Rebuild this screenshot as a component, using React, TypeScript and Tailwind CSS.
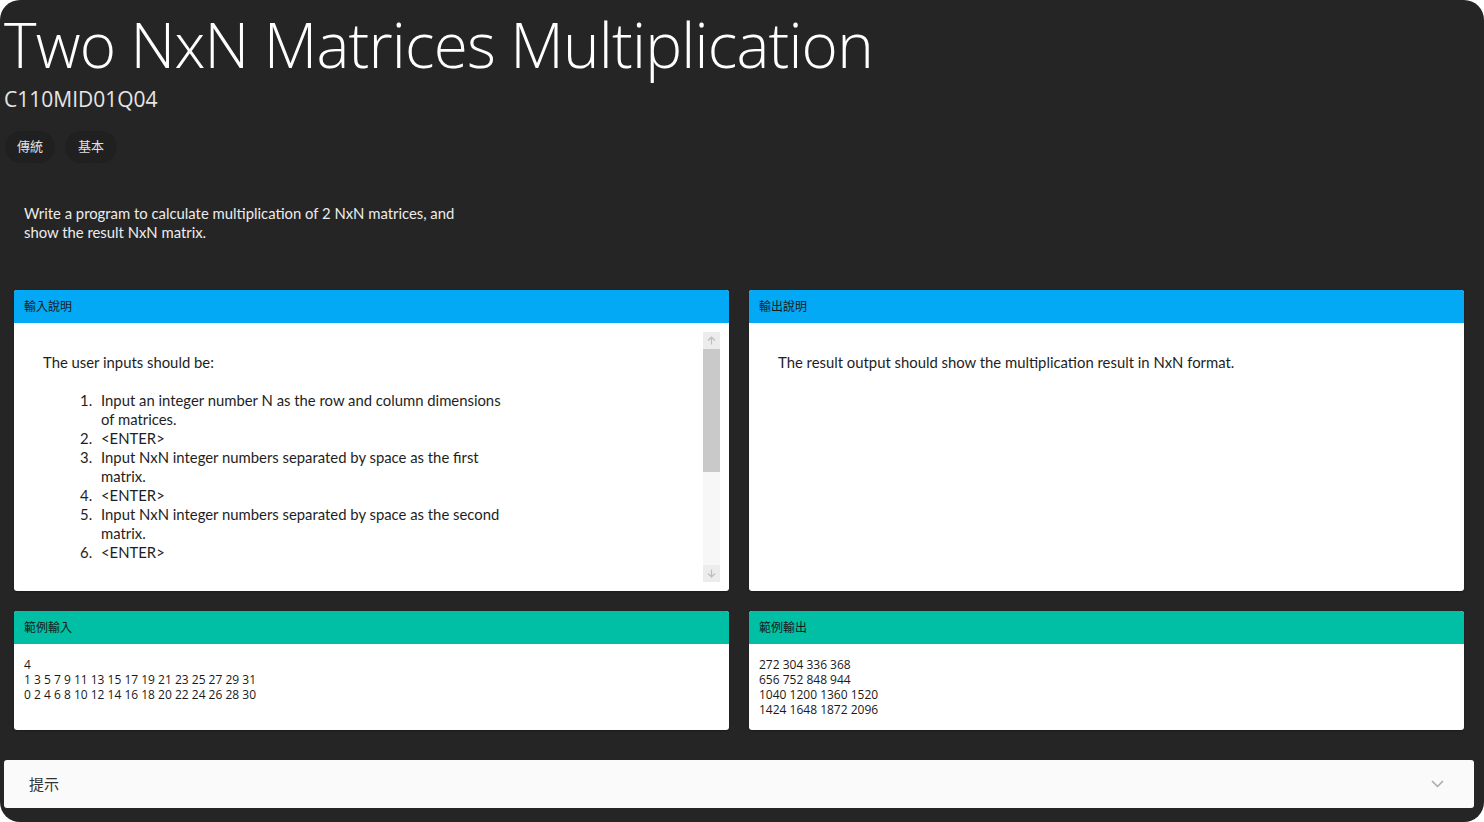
import React from "react";

const sans = "font-['Open_Sans','Noto_Sans_CJK_TC',sans-serif]";
const body = "font-['Lato','Noto_Sans_CJK_TC',sans-serif]";

function Panel({
  title,
  color,
  bodyClass,
  children,
}: {
  title: string;
  color: string;
  bodyClass: string;
  children: React.ReactNode;
}) {
  return (
    <div className="flex flex-col overflow-hidden rounded-[3px] bg-white shadow-[0_1px_2px_rgba(0,0,0,0.3)]">
      <div
        className={`flex h-[33px] items-center pl-[10px] text-[12px] text-[#1a1a1a] ${color} ${sans}`}
      >
        {title}
      </div>
      <div className={bodyClass}>{children}</div>
    </div>
  );
}

function ScrollBar() {
  return (
    <div className="my-[9px] mr-[9px] flex w-[17px] flex-col bg-[#f7f7f7]">
      <div className="flex h-[17px] items-center justify-center bg-[#ececec]">
        <svg width="9" height="9" viewBox="0 0 9 9" fill="none" stroke="#bdbdbd" strokeWidth="1.2">
          <path d="M4.5 8.5V1M1 4.5l3.5-3.5L8 4.5" />
        </svg>
      </div>
      <div className="h-[123px] bg-[#c9c9c9]" />
      <div className="flex-1" />
      <div className="flex h-[17px] items-center justify-center bg-[#ececec]">
        <svg width="9" height="9" viewBox="0 0 9 9" fill="none" stroke="#bdbdbd" strokeWidth="1.2">
          <path d="M4.5 0.5V8M1 4.5l3.5 3.5L8 4.5" />
        </svg>
      </div>
    </div>
  );
}

const steps = [
  "Input an integer number N as the row and column dimensions of matrices.",
  "<ENTER>",
  "Input NxN integer numbers separated by space as the first matrix.",
  "<ENTER>",
  "Input NxN integer numbers separated by space as the second matrix.",
  "<ENTER>",
];

export default function App() {
  return (
    <div className="min-h-screen bg-white">
      <div className="flex h-[822px] flex-col overflow-hidden rounded-[20px] bg-[#252525] pl-[4px] pr-[10px]">
        <h1
          className={`h-[88px] text-[62px] font-light leading-[88px] tracking-[-0.8px] text-white ${sans}`}
        >
          Two NxN Matrices Multiplication
        </h1>
        <div className={`h-[22px] text-[21px] leading-[22px] text-[#e6e6e6] ${sans}`}>
          C110MID01Q04
        </div>
        <div className={`ml-[1px] mt-[21px] flex gap-[10px] ${sans}`}>
          <span className="flex h-[32px] items-center rounded-full bg-[#202020] px-[12px] text-[13px] text-[#e0e0e0]">
            傳統
          </span>
          <span className="flex h-[32px] items-center rounded-full bg-[#202020] px-[13px] text-[13px] text-[#e0e0e0]">
            基本
          </span>
        </div>
        <p
          className={`ml-[20px] mt-[41px] w-[460px] text-[14.85px] leading-[19px] text-[#ececec] ${body}`}
        >
          Write a program to calculate multiplication of 2 NxN matrices, and show the result NxN matrix.
        </p>

        <div className="mt-[48px] grid grid-cols-2 gap-x-[20px] gap-y-[20px] px-[10px]">
          <Panel title="輸入說明" color="bg-[#03a9f4]" bodyClass="flex h-[268px] overflow-hidden">
            <div
              className={`flex-1 pl-[29px] pt-[30px] text-[14.85px] leading-[19px] text-[#1e1e1e] ${body}`}
            >
              <p>The user inputs should be:</p>
              <ol className="mt-[19px] w-[466px] pl-[37px]">
                {steps.map((s, i) => (
                  <li key={i} className="flex">
                    <span className="w-[21px] shrink-0">{i + 1}.</span>
                    <span>{s}</span>
                  </li>
                ))}
              </ol>
            </div>
            <ScrollBar />
          </Panel>
          <Panel title="輸出說明" color="bg-[#03a9f4]" bodyClass="h-[268px]">
            <div
              className={`pl-[29px] pt-[30px] text-[14.85px] leading-[19px] text-[#1e1e1e] ${body}`}
            >
              The result output should show the multiplication result in NxN format.
            </div>
          </Panel>
          <Panel title="範例輸入" color="bg-[#00bfa5]" bodyClass="h-[86px]">
            <div className={`pl-[10px] pt-[13px] text-[12px] leading-[15px] text-[#1a1a1a] ${sans}`}>
              <div>4</div>
              <div>1 3 5 7 9 11 13 15 17 19 21 23 25 27 29 31</div>
              <div>0 2 4 6 8 10 12 14 16 18 20 22 24 26 28 30</div>
            </div>
          </Panel>
          <Panel title="範例輸出" color="bg-[#00bfa5]" bodyClass="h-[86px]">
            <div className={`pl-[10px] pt-[13px] text-[12px] leading-[15px] text-[#1a1a1a] ${sans}`}>
              <div>272 304 336 368</div>
              <div>656 752 848 944</div>
              <div>1040 1200 1360 1520</div>
              <div>1424 1648 1872 2096</div>
            </div>
          </Panel>
        </div>

        <div className="mt-[30px] flex h-[48px] items-center justify-between rounded-[3px] bg-[#fafafa] pl-[25px] pr-[30px]">
          <span className={`text-[15px] text-[#333] ${sans}`}>提示</span>
          <svg width="13" height="8" viewBox="0 0 13 8" fill="none" stroke="#a8a8a8" strokeWidth="1.5">
            <path d="M1 1l5.5 5.5L12 1" />
          </svg>
        </div>
      </div>
    </div>
  );
}
